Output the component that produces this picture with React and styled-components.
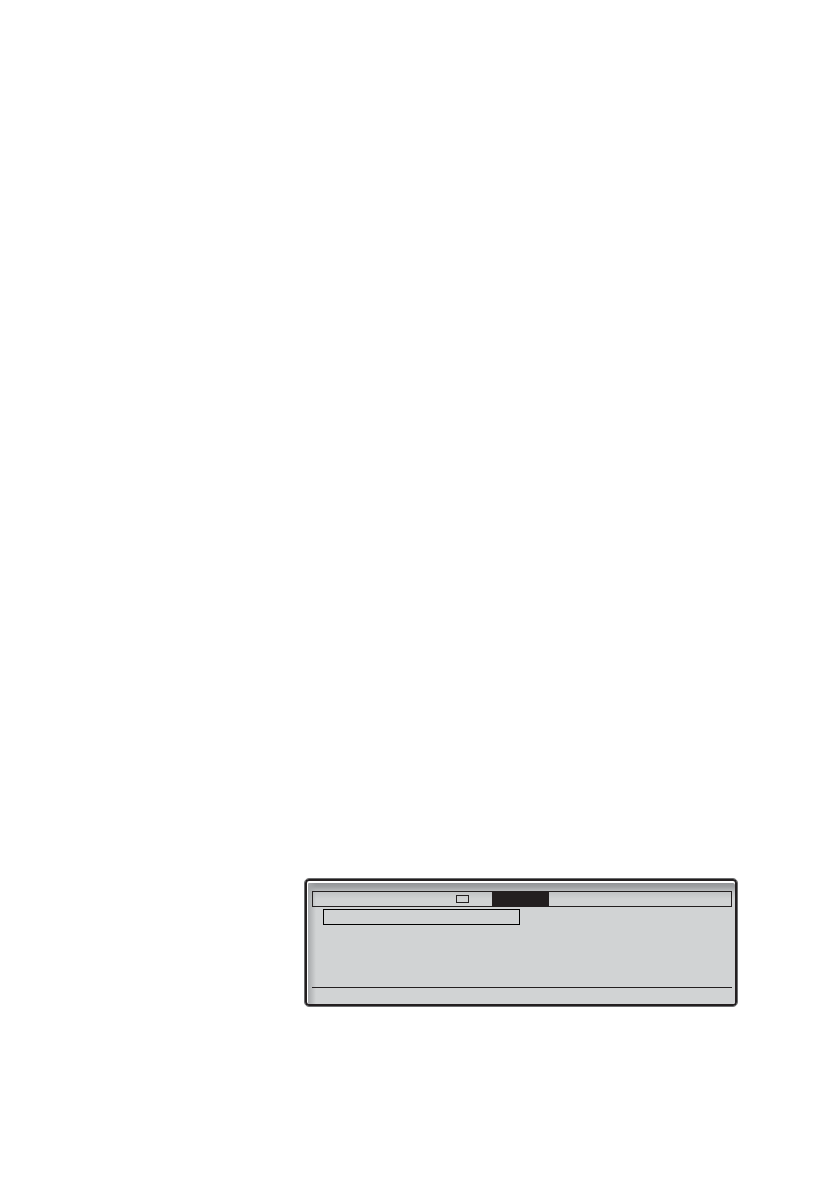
import styled, { createGlobalStyle } from "styled-components";

const GlobalStyle = createGlobalStyle`
  * {
    box-sizing: border-box;
  }
  body {
    margin: 0;
    background: #fff;
    font-family: "Liberation Sans", sans-serif;
  }
  ul {
    margin: 0;
    padding: 0;
    list-style: none;
  }
`;

const tab_list = [
  { id: 0, width: 143 },
  { id: 1, width: 36, icon: true },
  { id: 2, width: 57, active: true },
];

const Page = styled.main`
  min-height: 100vh;
  padding: 878px 102px 183px 304px;
`;
const Display = styled.section`
  overflow: hidden;
  padding: 4px 2px 2px 3px;
  border: 1px solid #6d6e70;
  border-radius: 5px;
  background: #fff;
  box-shadow: inset 0 0 0 2px #231f20;
`;
const Screen = styled.div`
  display: flex;
  flex-direction: column;
  padding: 8px 3px 0 4px;
  border-radius: 1px 2px 2px 1px;
  background:
    linear-gradient(to right, #a7a9ab, rgba(209, 211, 212, 0) 8px),
    linear-gradient(to bottom, #929497, #a0a2a4 4px, #c1c3c5 9px, #d1d3d4 16px);
`;
const TabBar = styled.ul`
  display: flex;
  height: 16px;
  border: 1px solid #231f20;
`;
const Tab = styled.li`
  display: flex;
  align-items: center;
  flex: none;
  width: ${({ $width }) => $width}px;
  background: ${({ $active }) => ($active ? "#231f20" : "transparent")};
`;
const TabIcon = styled.span`
  width: 13px;
  height: 8px;
  border: 1px solid #231f20;
`;
const Content = styled.div`
  height: 80px;
  padding: 2px 11px;
`;
const SelectedItem = styled.div`
  width: 197px;
  height: 16px;
  border: 1px solid #000;
`;
const SoftkeyBar = styled.footer`
  height: 17px;
  border-top: 1px solid #231f20;
`;

const App = () => {
  return (
    <>
      <GlobalStyle />
      <Page>
        <Display>
          <Screen>
            <TabBar>
              {tab_list.map((tab) => (
                <Tab key={tab.id} $width={tab.width} $active={tab.active}>
                  {tab.icon && <TabIcon />}
                </Tab>
              ))}
            </TabBar>
            <Content>
              <SelectedItem />
            </Content>
            <SoftkeyBar />
          </Screen>
        </Display>
      </Page>
    </>
  );
};
export default App;
